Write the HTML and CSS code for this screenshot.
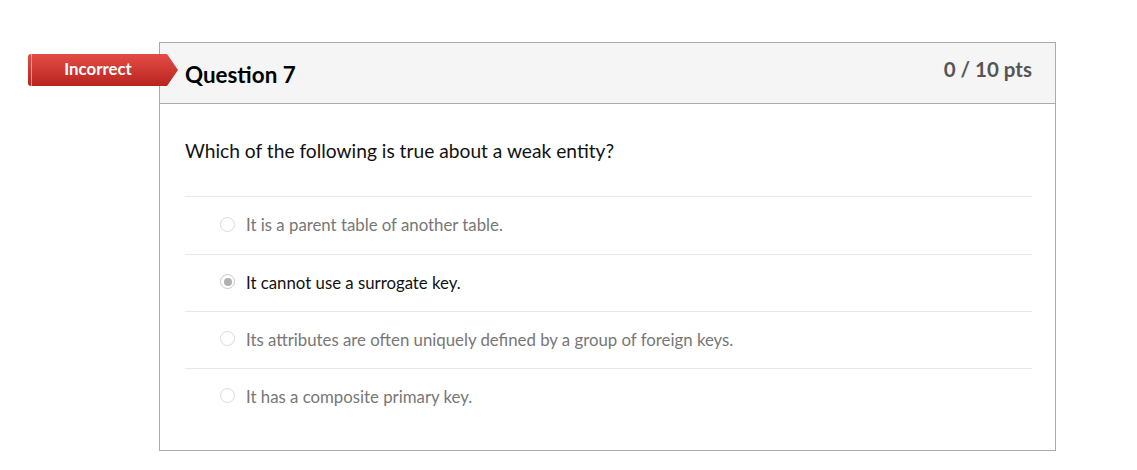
FILE: index.html
```html
<!DOCTYPE html>
<html lang="en">
<head>
<meta charset="utf-8">
<title>Question 7</title>
<link rel="stylesheet" href="styles.css">
</head>
<body>
<div class="page">
  <div class="question">
    <div class="badge"><span>Incorrect</span></div>
    <div class="q-header">
      <h2 class="q-title">Question 7</h2>
      <div class="q-points">0 / 10 pts</div>
    </div>
    <div class="q-body">
      <p class="q-text">Which of the following is true about a weak entity?</p>
      <div class="answers">
        <div class="answer"><span class="radio"></span><span class="answer-text">It is a parent table of another table.</span></div>
        <div class="answer selected"><span class="radio"></span><span class="answer-text">It cannot use a surrogate key.</span></div>
        <div class="answer"><span class="radio"></span><span class="answer-text">Its attributes are often uniquely defined by a group of foreign keys.</span></div>
        <div class="answer"><span class="radio"></span><span class="answer-text">It has a composite primary key.</span></div>
      </div>
    </div>
  </div>
</div>
</body>
</html>
```
FILE: styles.css
```css
html, body {
  margin: 0;
  padding: 0;
  background: #fff;
}
body {
  font-family: Lato, "Open Sans", "Liberation Sans", sans-serif;
  color: #2d2d2d;
}
.page {
  padding: 42px 0 0 159px;
}
.question {
  position: relative;
  width: 895px;
  border: 1px solid #ababab;
  background: #fff;
}
.badge {
  position: absolute;
  left: -132px;
  top: 11px;
  width: 150px;
  height: 32px;
  background: linear-gradient(#e44c47, #b9241f);
  clip-path: polygon(0 0, 139px 0, 150px 50%, 139px 100%, 0 100%);
  border-radius: 3px 0 0 3px;
  display: flex;
  align-items: center;
  box-sizing: border-box;
}
.badge::before {
  content: "";
  position: absolute;
  left: 3px;
  top: 0;
  bottom: 0;
  width: 1px;
  background: rgba(255, 255, 255, 0.55);
}
.badge span {
  width: 140px;
  text-align: center;
  color: #fff;
  font-weight: 700;
  font-size: 16.8px;
  line-height: 18px;
  margin-top: -3px;
}
.q-header {
  display: flex;
  justify-content: space-between;
  align-items: flex-start;
  height: 60px;
  background: #f5f5f5;
  border-bottom: 1px solid #ababab;
  padding: 0 23px 0 25px;
}
.q-title {
  margin: 20px 0 0;
  font-size: 22.4px;
  line-height: 24px;
  font-weight: 700;
  color: #000;
}
.q-points {
  margin-top: 14px;
  font-size: 20.5px;
  line-height: 24px;
  font-weight: 700;
  color: #555;
}
.q-body {
  padding: 34px 23px 25px 25px;
}
.q-text {
  margin: 0 0 33px;
  font-size: 19.2px;
  line-height: 25px;
  color: #111;
}
.answers {
  display: flex;
  flex-direction: column;
}
.answer {
  display: flex;
  align-items: center;
  height: 56px;
  box-sizing: content-box;
  border-top: 1px solid #e8e8e8;
  padding-left: 35px;
  font-size: 16.8px;
  color: #777;
}
.answer-text {
  margin-top: -2px;
}
.answer:first-child {
  height: 57px;
}
.radio {
  width: 15px;
  height: 15px;
  box-sizing: border-box;
  border: 1.5px solid #d9d9d9;
  border-radius: 50%;
  margin-right: 11px;
  margin-top: -3px;
  flex: none;
  display: flex;
  align-items: center;
  justify-content: center;
}
.answer.selected {
  color: #111;
}
.answer.selected .radio {
  border-color: #c8c8c8;
  background: #fff;
}
.answer.selected .radio::after {
  content: "";
  width: 8px;
  height: 8px;
  border-radius: 50%;
  background: #b0b0b0;
}
```
